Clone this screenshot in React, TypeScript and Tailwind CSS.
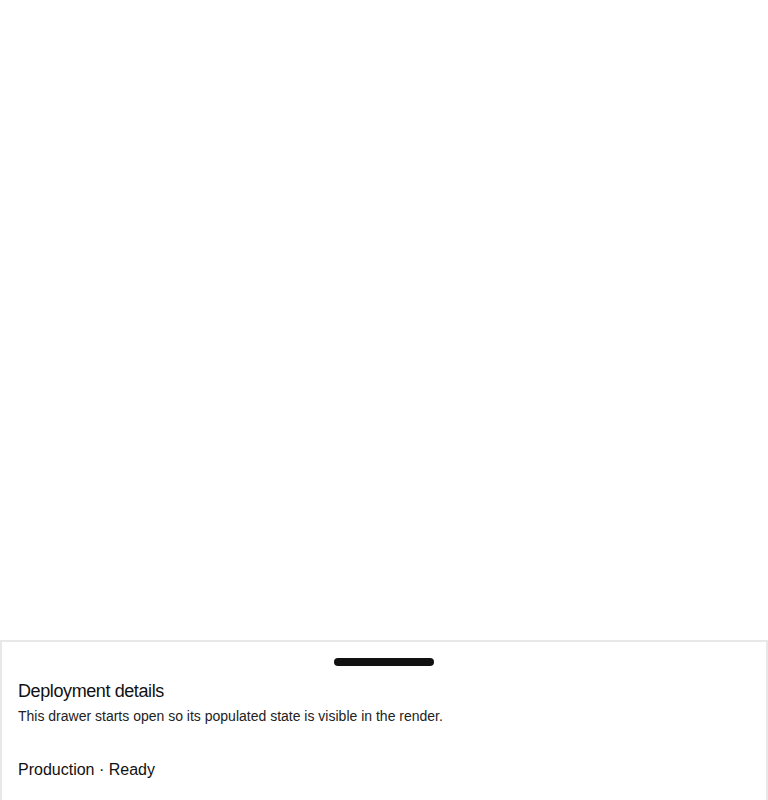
import React from "react";

export default function App() {
  return (
    <div
      className="flex h-[800px] w-full flex-col overflow-hidden bg-white text-[#111]"
      style={{ fontFamily: '"Liberation Sans", Arial, sans-serif' }}
    >
      <div className="flex-1" />
      <div className="flex h-[160px] flex-col border-2 border-b-0 border-[#e8e8e8] bg-white">
        <div className="mx-auto mt-4 h-2 w-[100px] rounded-full bg-[#111]" />
        <div className="flex flex-col px-4 pt-[11px]">
          <h2 className="text-[18px] leading-[28px] tracking-[-0.4px] text-[#111]">Deployment details</h2>
          <p className="mt-[1px] text-[14px] leading-[20px] text-[#222]">
            This drawer starts open so its populated state is visible in the render.
          </p>
        </div>
        <div className="px-4 pt-[32px] text-[16px] leading-[24px] text-[#111]">Production · Ready</div>
      </div>
    </div>
  );
}
